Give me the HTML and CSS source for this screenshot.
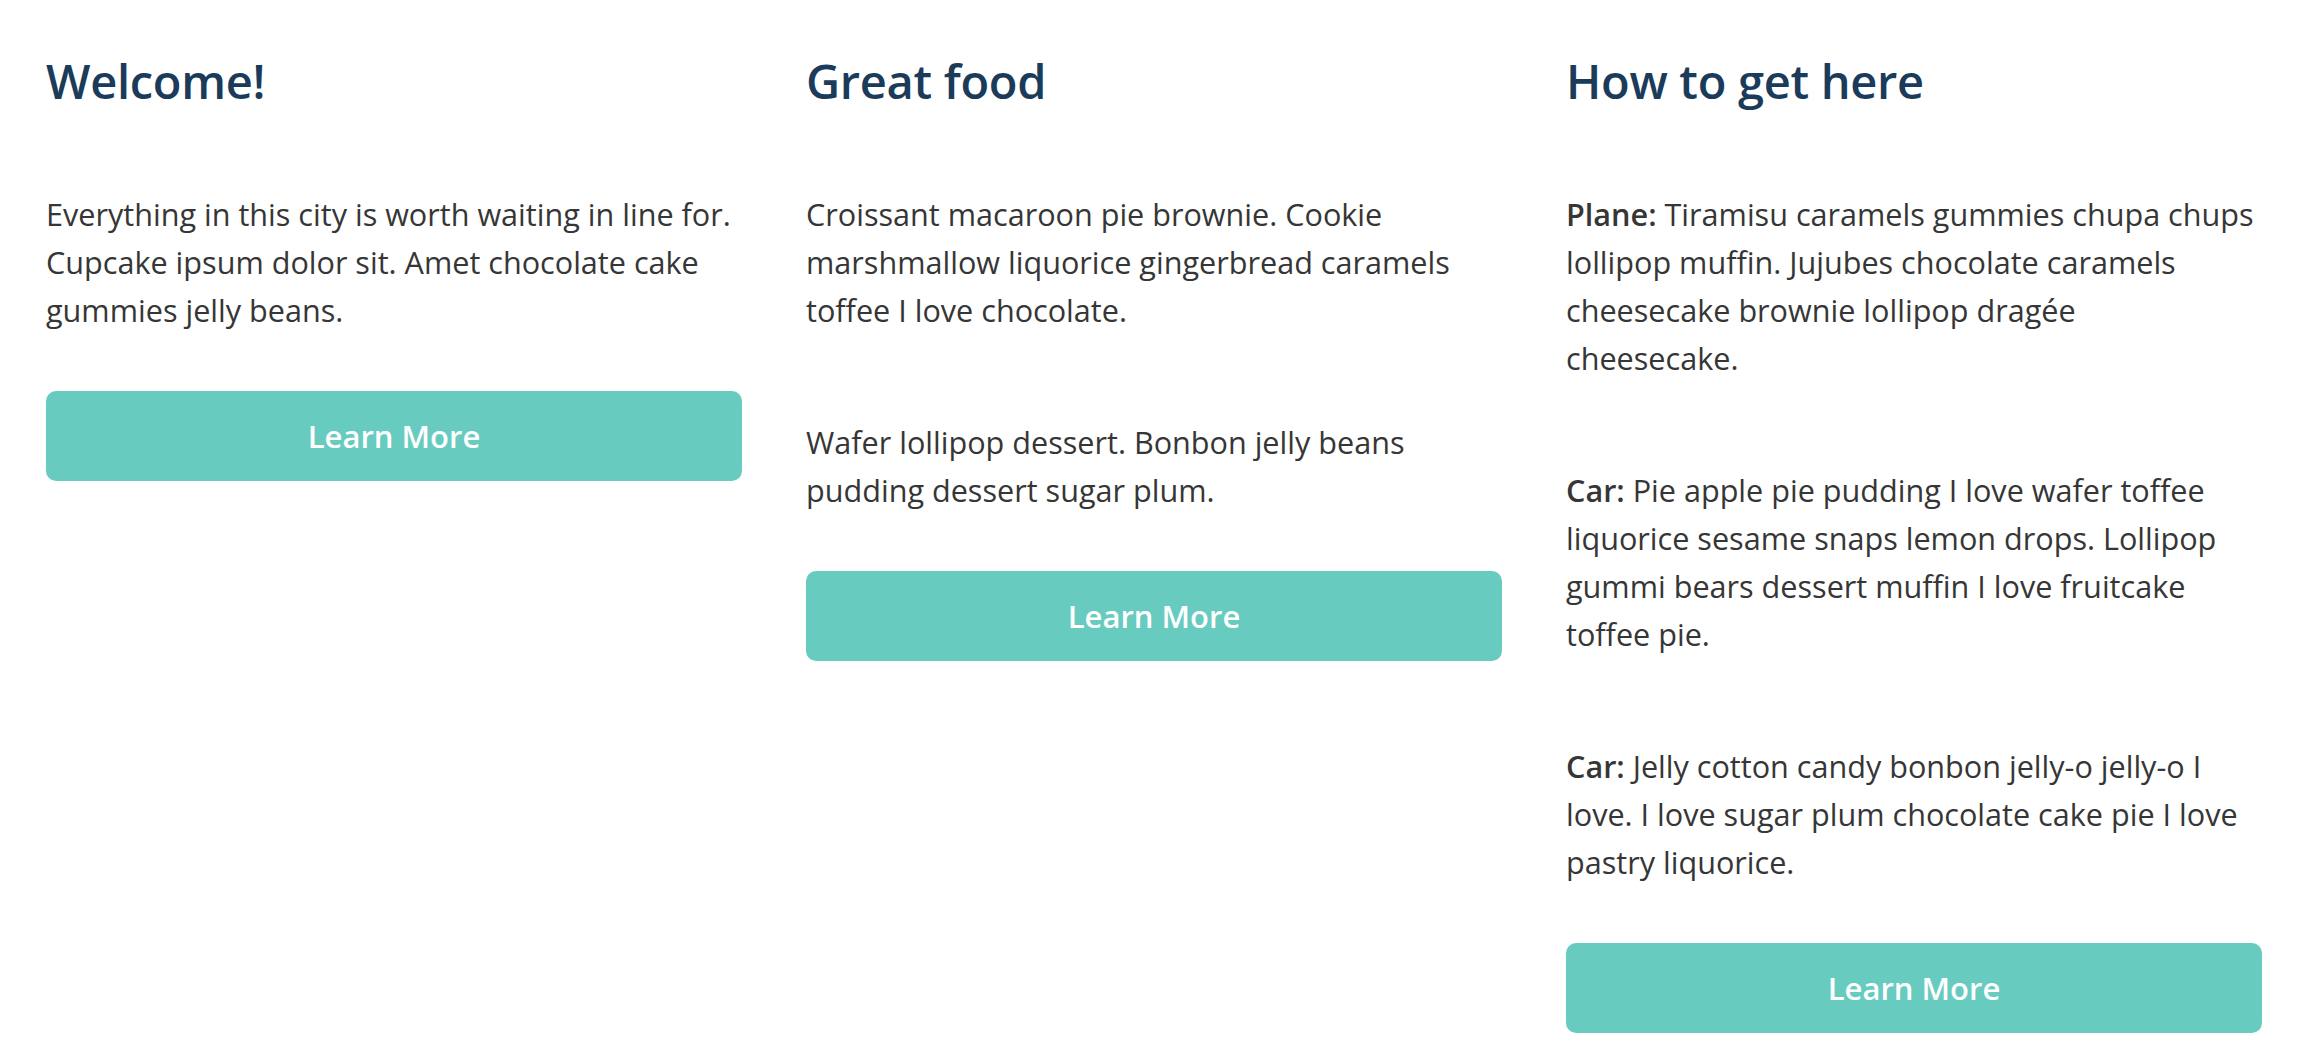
FILE: index.html
```html
<!DOCTYPE html>
<html lang="en">
<head>
<meta charset="utf-8">
<title>Welcome</title>
<link rel="stylesheet" href="styles.css">
</head>
<body>
<main class="features">
  <section class="feature">
    <h2 class="feature-title">Welcome!</h2>
    <p class="feature-text">Everything in this city is worth waiting in line for. Cupcake ipsum dolor sit. Amet chocolate cake gummies jelly beans.</p>
    <a class="btn" href="#">Learn More</a>
  </section>
  <section class="feature">
    <h2 class="feature-title">Great food</h2>
    <p class="feature-text">Croissant macaroon pie brownie. Cookie marshmallow liquorice gingerbread caramels toffee I love chocolate.</p>
    <p class="feature-text">Wafer lollipop dessert. Bonbon jelly beans pudding dessert sugar plum.</p>
    <a class="btn" href="#">Learn More</a>
  </section>
  <section class="feature">
    <h2 class="feature-title">How to get here</h2>
    <p class="feature-text"><strong>Plane:</strong> Tiramisu caramels gummies chupa chups lollipop muffin. Jujubes chocolate caramels cheesecake brownie lollipop dragée<br>cheesecake.</p>
    <p class="feature-text"><strong>Car:</strong> Pie apple pie pudding I love wafer toffee liquorice sesame snaps lemon drops. Lollipop gummi bears dessert muffin I love fruitcake toffee pie.</p>
    <p class="feature-text"><strong>Car:</strong> Jelly cotton candy bonbon jelly-o jelly-o I love. I love sugar plum chocolate cake pie I love pastry liquorice.</p>
    <a class="btn" href="#">Learn More</a>
  </section>
</main>
</body>
</html>
```
FILE: styles.css
```css
html, body {
  margin: 0;
  padding: 0;
  background: #ffffff;
}

body {
  font-family: "Open Sans", "Noto Sans", sans-serif;
  color: #363636;
}

.features {
  display: grid;
  grid-template-columns: repeat(3, 696px);
  column-gap: 64px;
  align-items: start;
  padding: 53px 38px 0 46px;
}

.feature {
  display: flex;
  flex-direction: column;
}

.feature-title {
  margin: 0 0 81px;
  font-size: 47px;
  line-height: 56px;
  font-weight: 600;
  color: #1a3b59;
  letter-spacing: -0.3px;
}

.feature-text {
  margin: 0;
  font-size: 30.6px;
  line-height: 48px;
}

.feature-text + .feature-text {
  margin-top: 84px;
}

.feature-text strong {
  font-weight: 600;
}

.btn {
  display: flex;
  align-items: center;
  justify-content: center;
  margin-top: 57px;
  height: 90px;
  border-radius: 10px;
  background: #68cbc0;
  color: #ffffff;
  font-size: 31px;
  font-weight: 600;
  text-decoration: none;
}
```
